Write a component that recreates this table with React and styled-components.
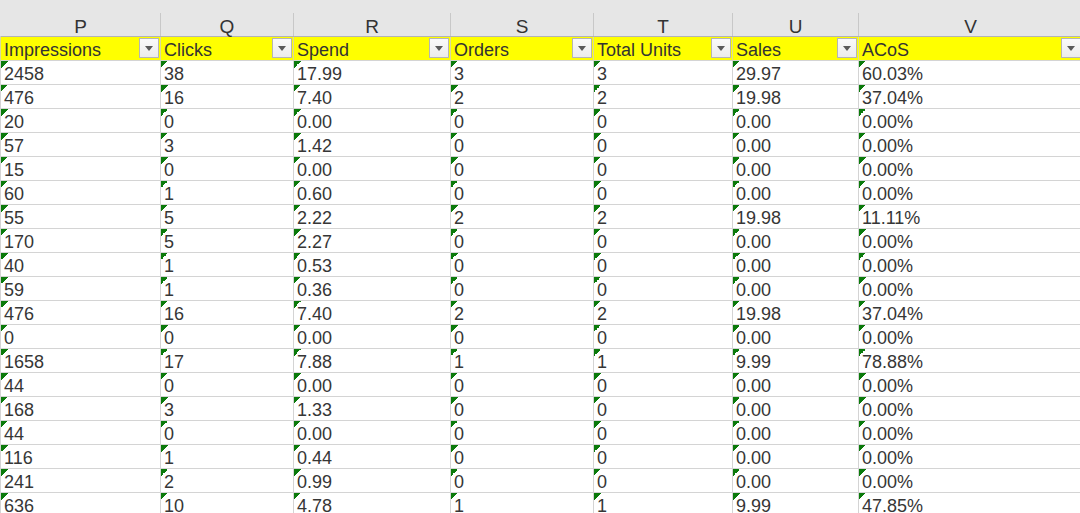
import React from "react";
import styled, { createGlobalStyle } from "styled-components";

const Global = createGlobalStyle`
  html, body { margin: 0; padding: 0; background: #ffffff; overflow: hidden; }
  body { font-family: "Liberation Sans", Arial, sans-serif; }
  * { box-sizing: border-box; }
`;

const COLS = "160px 133px 157px 143px 139px 126px 224px";

const Sheet = styled.div`
  width: 1083px;
`;

const LetterBar = styled.div`
  background: #e6e6e6;
  padding-top: 13px;
`;

const Row = styled.div`
  display: grid;
  grid-template-columns: ${COLS};
  border-left: 1px solid ${(p) => p.$edge || "#d4d4d4"};
`;

const LetterRow = styled(Row)`
  border-left-color: transparent;
  border-bottom: 1px solid #b3b3b3;
`;

const LetterCell = styled.div`
  height: 23px;
  border-right: 1px solid #c8c8c8;
  display: flex;
  align-items: flex-end;
  justify-content: center;
  font-size: 19px;
  line-height: 17px;
  color: #333333;
  padding-bottom: 1px;
`;

const HeadCell = styled.div`
  height: 24px;
  background: #ffff00;
  border-right: 1px solid #d9d9a0;
  border-bottom: 1px solid #d4d4d4;
  display: flex;
  align-items: flex-end;
  justify-content: space-between;
  padding: 0 1px 2px 3px;
  font-size: 18px;
  line-height: 16px;
  color: #333333;
`;

const FilterButton = styled.span`
  align-self: center;
  margin-bottom: -1px;
  width: 20px;
  height: 20px;
  flex: none;
  border: 1px solid #b5b5b5;
  background: linear-gradient(#fafafa, #ececec);
  display: flex;
  align-items: center;
  justify-content: center;
  &::after {
    content: "";
    border-left: 4.5px solid transparent;
    border-right: 4.5px solid transparent;
    border-top: 5px solid #5a5a5a;
  }
`;

const DataCell = styled.div`
  height: 24px;
  border-right: 1px solid #d4d4d4;
  border-bottom: 1px solid #d4d4d4;
  display: flex;
  align-items: flex-end;
  padding: 0 2px 2px 3px;
  font-size: 18px;
  line-height: 16px;
  color: #363636;
  white-space: nowrap;
  background: linear-gradient(135deg, #0b7a0b 50%, transparent 50%) 0 0 / 7px 7px no-repeat;
`;

const letters = ["P", "Q", "R", "S", "T", "U", "V"];
const headers = ["Impressions", "Clicks", "Spend", "Orders", "Total Units", "Sales", "ACoS"];

const rows = [
  ["2458", "38", "17.99", "3", "3", "29.97", "60.03%"],
  ["476", "16", "7.40", "2", "2", "19.98", "37.04%"],
  ["20", "0", "0.00", "0", "0", "0.00", "0.00%"],
  ["57", "3", "1.42", "0", "0", "0.00", "0.00%"],
  ["15", "0", "0.00", "0", "0", "0.00", "0.00%"],
  ["60", "1", "0.60", "0", "0", "0.00", "0.00%"],
  ["55", "5", "2.22", "2", "2", "19.98", "11.11%"],
  ["170", "5", "2.27", "0", "0", "0.00", "0.00%"],
  ["40", "1", "0.53", "0", "0", "0.00", "0.00%"],
  ["59", "1", "0.36", "0", "0", "0.00", "0.00%"],
  ["476", "16", "7.40", "2", "2", "19.98", "37.04%"],
  ["0", "0", "0.00", "0", "0", "0.00", "0.00%"],
  ["1658", "17", "7.88", "1", "1", "9.99", "78.88%"],
  ["44", "0", "0.00", "0", "0", "0.00", "0.00%"],
  ["168", "3", "1.33", "0", "0", "0.00", "0.00%"],
  ["44", "0", "0.00", "0", "0", "0.00", "0.00%"],
  ["116", "1", "0.44", "0", "0", "0.00", "0.00%"],
  ["241", "2", "0.99", "0", "0", "0.00", "0.00%"],
  ["636", "10", "4.78", "1", "1", "9.99", "47.85%"],
];

export default function App() {
  return (
    <Sheet>
      <Global />
      <LetterBar>
        <LetterRow>
          {letters.map((l) => (
            <LetterCell key={l}>{l}</LetterCell>
          ))}
        </LetterRow>
      </LetterBar>
      <Row $edge="#d9d9a0">
        {headers.map((h) => (
          <HeadCell key={h}>
            <span>{h}</span>
            <FilterButton />
          </HeadCell>
        ))}
      </Row>
      {rows.map((r, i) => (
        <Row key={i}>
          {r.map((v, j) => (
            <DataCell key={j}>{v}</DataCell>
          ))}
        </Row>
      ))}
    </Sheet>
  );
}
